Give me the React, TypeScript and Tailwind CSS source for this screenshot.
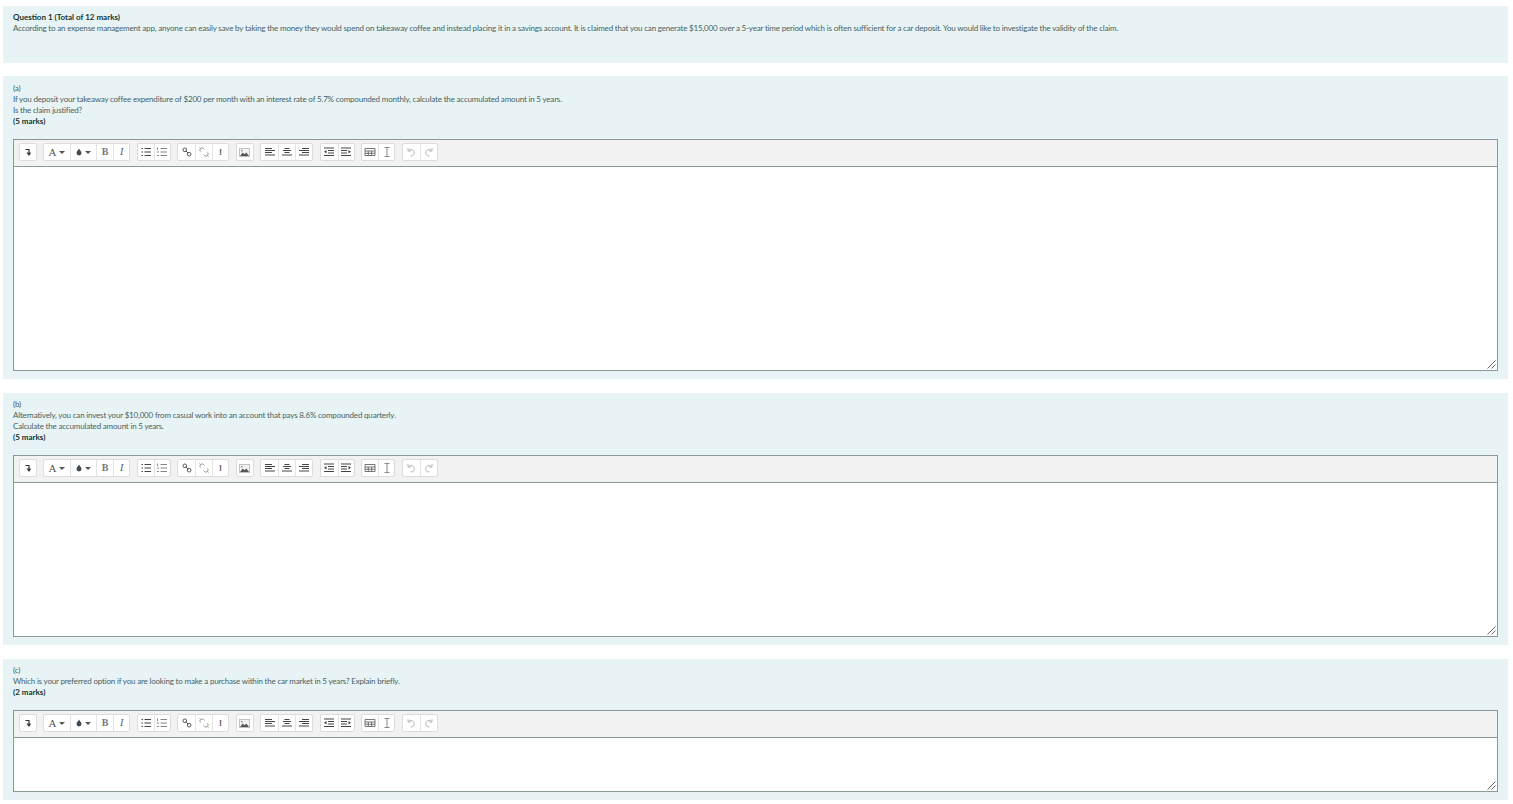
import type { ReactNode } from "react";

const ink = "#444";

function Lines({ d, sw = 1, c = ink }: { d: string; sw?: number; c?: string }) {
  return (
    <svg width="12" height="12" viewBox="0 0 12 12" fill="none" stroke={c} strokeWidth={sw}>
      <path d={d} />
    </svg>
  );
}

function Caret() {
  return <span className="ml-[3px] mt-[1px] h-0 w-0 border-x-[3px] border-t-[3px] border-x-transparent border-t-[#555]" />;
}

function Arrow({ d, tip }: { d: string; tip: string }) {
  return (
    <svg width="12" height="12" viewBox="0 0 12 12" fill="none" stroke="#444" strokeWidth="1.100">
      <path d={d} />
      <path d={tip} fill="#444" stroke="none" />
    </svg>
  );
}

const icons: Record<string, ReactNode> = {
  collapse: <Lines d="M3.500 3.500h3.500v5M5 6.500l2 2.500 1.500-2.500" sw={1.200} c="#333" />,
  font: (
    <span className="flex items-center font-['Liberation_Serif',serif] text-[11px] leading-none text-[#555]">
      A<Caret />
    </span>
  ),
  drop: (
    <span className="flex items-center">
      <svg width="6" height="8" viewBox="0 0 7 9">
        <path d="M3.500 0.500C2.600 2.400 0.600 3.800 0.600 5.800a2.900 2.900 0 0 0 5.800 0C6.400 3.800 4.400 2.400 3.500 0.500z" fill="#3f4a55" />
      </svg>
      <Caret />
    </span>
  ),
  bold: <span className="font-['Liberation_Serif',serif] text-[10px] font-bold leading-none text-[#777]">B</span>,
  italic: <span className="font-['Liberation_Serif',serif] text-[10px] italic leading-none text-[#555]">I</span>,
  ul: <Lines d="M1.500 2.500h1.500M1.500 6h1.500M1.500 9.500h1.500M4.500 2.500H11M4.500 6H11M4.500 9.500H11" sw={1.100} />,
  ol: <Lines d="M1.500 1.500v2.500M1 6h2M1 9.500h2M4.500 2.500H11M4.500 6H11M4.500 9.500H11" sw={0.800} c="#666" />,
  link: (
    <svg width="12" height="12" viewBox="0 0 12 12" fill="none" stroke="#555" strokeWidth="1">
      <circle cx="3.800" cy="3.800" r="1.800" />
      <circle cx="8.200" cy="8.200" r="1.800" />
      <path d="M4.800 4.800l2.400 2.400" />
    </svg>
  ),
  unlink: (
    <svg width="12" height="12" viewBox="0 0 12 12" fill="none" stroke="#8a8a8a" strokeWidth="0.900">
      <path d="M2.500 5.500a2 2 0 0 1 3-3l1 1M9.500 6.500a2 2 0 0 1-3 3l-1-1M1.500 1.500l1 1M9.500 9.500l1 1" />
    </svg>
  ),
  warn: <span className="font-['Liberation_Sans',sans-serif] text-[9px] font-bold leading-none text-[#555]">!</span>,
  image: (
    <svg width="11" height="9" viewBox="0 0 12 10">
      <rect x="0.500" y="0.500" width="11" height="9" fill="#f4f4f4" stroke="#bbb" />
      <path d="M1 9l3-4 2 2 2-2 3 4z" fill="#555" />
      <circle cx="3" cy="3" r="1" fill="#999" />
    </svg>
  ),
  left: <Lines d="M1 2.500h7M1 4.500h10M1 6.500h7M1 9h10" sw={1.200} />,
  center: <Lines d="M3.500 2.500h5M2 4.500h8M3.500 6.500h5M1 9h10" sw={1.200} />,
  right: <Lines d="M4 2.500h7M1 4.500h10M4 6.500h7M1 9h10" sw={1.200} />,
  outdent: <Arrow d="M1 2h10M5 4.500h6M5 7h6M1 9.500h10" tip="M1 5.750L3.500 4V7.500z" />,
  indent: <Arrow d="M1 2h10M1 4.500h6M1 7h6M1 9.500h10" tip="M11 5.750L8.500 4V7.500z" />,
  table: <Lines d="M1 2.500h10v7H1zM1 5h10M1 7.250h10M4.300 5v4.500M7.600 5v4.500" sw={0.800} c="#555" />,
  clear: <Lines d="M3.500 1.500h5M6 1.500v9M3.500 10.500h5" c="#888" />,
  undo: <Lines d="M3 2v3h3M3.300 4.800A3.300 3.300 0 1 1 5.500 10" c="#b8b8b8" />,
  redo: <Lines d="M9 2v3H6M8.700 4.800A3.300 3.300 0 1 0 6.500 10" c="#b8b8b8" />,
};

const groups: [string, number][][] = [
  [["collapse", 15.5]],
  [["font", 26], ["drop", 26], ["bold", 17], ["italic", 16]],
  [["ul", 16], ["ol", 16]],
  [["link", 17], ["unlink", 17], ["warn", 16]],
  [["image", 16]],
  [["left", 17], ["center", 17], ["right", 17]],
  [["outdent", 17], ["indent", 16]],
  [["table", 16], ["clear", 16]],
  [["undo", 17], ["redo", 17]],
];

function Toolbar() {
  return (
    <div className="flex h-[28px] items-center gap-[6.500px] border border-[#8a9a9c] bg-[#f2f2f2] pb-[2px] pl-[5px]">
      {groups.map((group, i) => (
        <div key={i} className="flex h-[18px] rounded-[2px] border border-[#dcdcdc] bg-white">
          {group.map(([name, width], j) => (
            <div
              key={name}
              style={{ width }}
              className={`flex items-center justify-center ${j > 0 ? "border-l border-[#e4e4e4]" : ""}`}
            >
              {icons[name]}
            </div>
          ))}
        </div>
      ))}
    </div>
  );
}

function Grip() {
  return (
    <svg width="9" height="9" viewBox="0 0 9 9" className="absolute bottom-[1px] right-[1px]" stroke="#555" strokeWidth="0.900">
      <path d="M0.500 8.500L8.500 0.500M4.500 8.500L8.500 4.500" />
    </svg>
  );
}

function Part({
  label,
  lines,
  marks,
  height,
  top = "pt-[6px]",
}: {
  label: string;
  lines: string[];
  marks: string;
  height: string;
  top?: string;
}) {
  return (
    <section className={`mb-[14px] bg-[#e7f3f5] px-[10px] pb-[8px] ${top}`}>
      <p>{label}</p>
      {lines.map((line) => (
        <p key={line}>{line}</p>
      ))}
      <p className="font-bold tracking-normal text-[#12332f]">{marks}</p>
      <div className="mt-[12px]">
        <Toolbar />
        <div className={`relative border border-t-0 border-[#8a9a9c] bg-white ${height}`}>
          <Grip />
        </div>
      </div>
    </section>
  );
}

export default function App() {
  return (
    <main className="h-[804px] overflow-hidden bg-white pb-[4px] pl-[3px] pr-[5px] pt-[6px] font-['Lato',sans-serif] text-[8px] leading-[11px] tracking-[-0.18px] text-[#4a5f63]">
      <section className="mb-[13px] h-[57px] bg-[#e7f3f5] px-[10px] pt-[6px]">
        <h1 className="font-bold tracking-normal text-[#12332f]">Question 1 (Total of 12 marks)</h1>
        <p>
          According to an expense management app, anyone can easily save by taking the money they would spend on takeaway coffee and instead placing it in a savings account. It is claimed that you can generate $15,000 over a 5-year time period which is often sufficient for a car deposit. You would like to investigate the validity of the claim.
        </p>
      </section>
      <Part
        label="(a)"
        top="pt-[7px]"
        lines={[
          "If you deposit your takeaway coffee expenditure of $200 per month with an interest rate of 5.7% compounded monthly, calculate the accumulated amount in 5 years.",
          "Is the claim justified?",
        ]}
        marks="(5 marks)"
        height="h-[204px]"
      />
      <Part
        label="(b)"
        lines={[
          "Alternatively, you can invest your $10,000 from casual work into an account that pays 8.6% compounded quarterly.",
          "Calculate the accumulated amount in 5 years.",
        ]}
        marks="(5 marks)"
        height="h-[154px]"
      />
      <Part
        label="(c)"
        lines={["Which is your preferred option if you are looking to make a purchase within the car market in 5 years? Explain briefly."]}
        marks="(2 marks)"
        height="h-[54px]"
      />
    </main>
  );
}
